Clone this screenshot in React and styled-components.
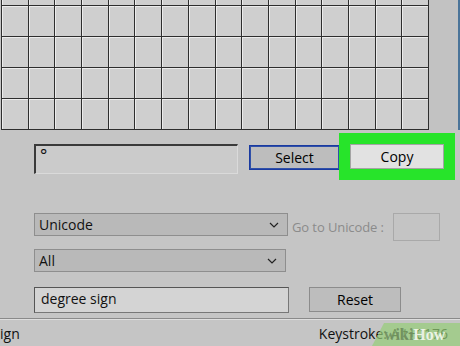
import React from 'react';
import styled, { createGlobalStyle } from 'styled-components';

const GlobalStyle = createGlobalStyle`
  html, body {
    margin: 0;
    padding: 0;
    background: #c5c5c5;
  }
  body {
    font-family: "Open Sans", "Noto Sans", Arial, sans-serif;
  }
`;

const Window = styled.div`
  position: relative;
  width: 460px;
  height: 346px;
  overflow: hidden;
  background: #c5c5c5;
  color: #111;
  font-size: 13px;
`;

const Top = styled.div`
  display: flex;
  height: 130px;
`;

const GridClip = styled.div`
  width: 429px;
  height: 130px;
  overflow: hidden;
  padding-left: 1px;
  box-sizing: border-box;
`;

const CharGrid = styled.div`
  display: grid;
  grid-template-columns: repeat(16, 1fr);
  grid-auto-rows: 30px;
  gap: 1px;
  margin-top: -26px;
  background: #2e2e2e;
  border: 1px solid #2e2e2e;
`;

const Cell = styled.div`
  background: #cfcfcf;
  border-top: 1px solid #ececec;
  border-left: 1px solid #ececec;
`;

const Strip = styled.div`
  flex: 1;
  background: #c2c2c2;
  border-right: 2px solid #4b7499;
`;

const Panel = styled.div`
  display: flex;
  flex-direction: column;
  padding-left: 34px;
  height: 188px;
`;

const Row = styled.div`
  display: flex;
  align-items: flex-start;
  margin-top: ${p => p.$top}px;
`;

const CharBox = styled.div`
  width: 204px;
  height: 30px;
  box-sizing: border-box;
  background: #cbcbcb;
  border-top: 2px solid #3a3a3a;
  border-left: 2px solid #3a3a3a;
  border-right: 1px solid #dadada;
  border-bottom: 1px solid #dadada;
  padding: 0 4px;
  font-size: 17px;
  line-height: 18px;
`;

const Button = styled.button`
  width: ${p => p.$w}px;
  height: 25px;
  margin-left: ${p => p.$ml}px;
  margin-top: ${p => p.$mt || 0}px;
  box-sizing: border-box;
  font-family: inherit;
  font-size: 14px;
  color: #000;
  padding: 0;
  background: ${p => (p.$light ? '#e2e2e2' : '#bdbdbd')};
  border: 1px solid ${p => (p.$blue ? '#1a3aa0' : p.$light ? '#a4a4a4' : '#8c8c8c')};
  box-shadow: ${p =>
    p.$highlight
      ? '0 0 0 11px #27e42a'
      : p.$blue
      ? 'inset 0 0 0 1px #3050a8'
      : 'none'};
`;

const Select = styled.div`
  display: flex;
  align-items: center;
  justify-content: space-between;
  width: ${p => p.$w}px;
  height: 23px;
  box-sizing: border-box;
  padding: 0 8px 0 4px;
  background: #b9b9b9;
  border: 1px solid #8e8e8e;
  font-size: 14px;
`;

const Chevron = styled.svg`
  width: 10px;
  height: 6px;
  fill: none;
  stroke: #222;
  stroke-width: 1.2;
`;

const Label = styled.span`
  margin-left: 4px;
  margin-top: 5px;
  font-size: 13px;
  letter-spacing: -0.1px;
  color: #8b8b8b;
  white-space: nowrap;
`;

const SmallBox = styled.div`
  width: 47px;
  height: 28px;
  margin-left: 9px;
  box-sizing: border-box;
  border: 1px solid #a9a9a9;
  background: #c4c4c4;
`;

const SearchBox = styled.div`
  width: 255px;
  height: 26px;
  box-sizing: border-box;
  background: #d4d4d4;
  border: 1px solid #555;
  border-right-color: #777;
  border-bottom-color: #777;
  padding: 2px 6px;
  font-size: 14px;
  line-height: 18px;
`;

const Status = styled.div`
  display: flex;
  justify-content: space-between;
  align-items: center;
  height: 28px;
  border-top: 1px solid #8a8a8a;
  box-shadow: inset 0 1px 0 #dedede;
  padding-right: 12px;
  font-size: 14px;
`;

const Watermark = styled.div`
  position: absolute;
  right: 0;
  bottom: 0;
  width: 76px;
  height: 23px;
  padding-left: 12px;
  background: rgba(150, 205, 120, 0.7);
  clip-path: polygon(12px 0, 100% 0, 100% 100%, 0 100%);
  display: flex;
  align-items: center;
  font-family: "Liberation Serif", serif;
  font-weight: bold;
  font-size: 16px;
`;

const Wiki = styled.span`
  color: rgba(110, 140, 95, 0.85);
`;

const How = styled.span`
  color: rgba(246, 250, 242, 0.9);
`;

const ChevronIcon = () => (
  <Chevron viewBox="0 0 10 6">
    <polyline points="1 1 5 5 9 1" />
  </Chevron>
);

export default function App() {
  const cells = Array.from({ length: 16 * 5 });
  return (
    <>
      <GlobalStyle />
      <Window>
        <Top>
          <GridClip>
            <CharGrid>
              {cells.map((_, i) => (
                <Cell key={i} />
              ))}
            </CharGrid>
          </GridClip>
          <Strip />
        </Top>
        <Panel>
          <Row $top={14}>
            <CharBox>°</CharBox>
            <Button $w={91} $ml={11} $mt={1} $blue>Select</Button>
            <Button $w={94} $ml={10} $light $highlight>Copy</Button>
          </Row>
          <Row $top={39}>
            <Select $w={254}>
              Unicode
              <ChevronIcon />
            </Select>
            <Label>Go to Unicode :</Label>
            <SmallBox />
          </Row>
          <Row $top={8}>
            <Select $w={252}>
              All
              <ChevronIcon />
            </Select>
          </Row>
          <Row $top={15}>
            <SearchBox>degree sign</SearchBox>
            <Button $w={92} $ml={20}>Reset</Button>
          </Row>
        </Panel>
        <Status>
          <span>ign</span>
          <span>Keystroke: Alt+0176</span>
        </Status>
        <Watermark>
          <Wiki>wiki</Wiki>
          <How>How</How>
        </Watermark>
      </Window>
    </>
  );
}
